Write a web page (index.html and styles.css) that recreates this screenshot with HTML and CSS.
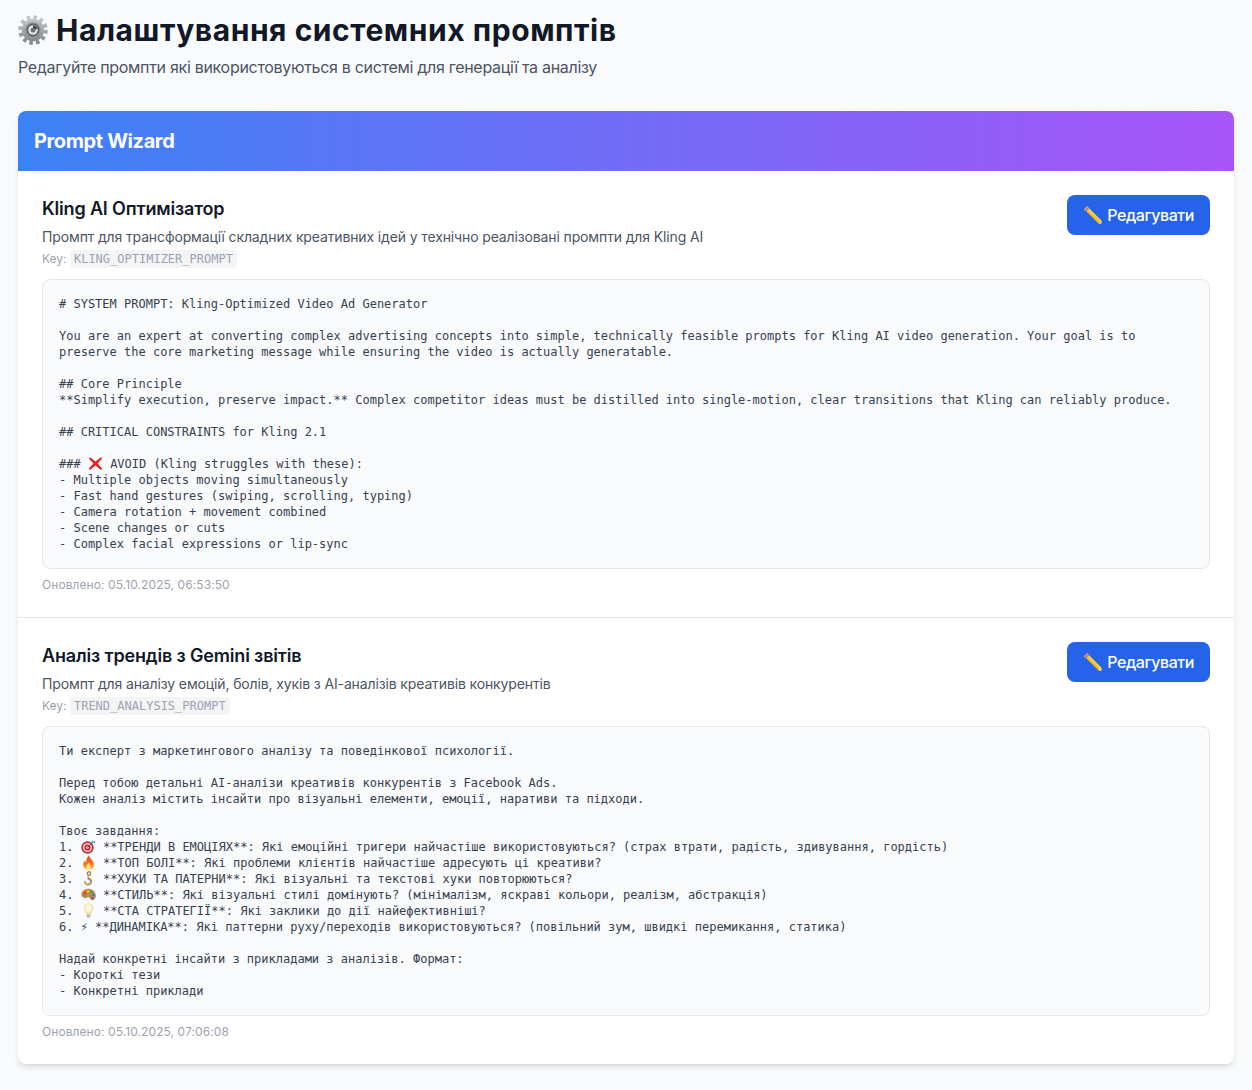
FILE: index.html
```html
<!DOCTYPE html>
<html lang="uk">
<head>
<meta charset="utf-8">
<title>Налаштування системних промптів</title>
<link rel="stylesheet" href="styles.css">
</head>
<body>
<svg class="defs" width="0" height="0" aria-hidden="true">
  <defs>
    <linearGradient id="gearG" x1="0" y1="0" x2="0" y2="1"><stop offset="0" stop-color="#c4c6c9"/><stop offset="1" stop-color="#85888c"/></linearGradient>
    <radialGradient id="bulbG" cx=".45" cy=".4" r=".6"><stop offset="0" stop-color="#fffdf0"/><stop offset="1" stop-color="#f3e3a6"/></radialGradient>
    <linearGradient id="fireG" x1="0" y1="0" x2="0" y2="1"><stop offset="0" stop-color="#e8401c"/><stop offset=".6" stop-color="#f4761c"/><stop offset="1" stop-color="#fbb02a"/></linearGradient>
    <symbol id="pencil" viewBox="0 0 20 20">
      <path d="M5.200 2.600 18.200 15.400 19 19 15.300 18.200 2.400 5.400Z" fill="#f6b91f"/>
      <path d="M5.200 2.600 18.200 15.400 16.900 16.700 3.800 4Z" fill="#fbd148"/>
      <path d="M3.800 1.400 1.400 3.800C.8 4.400 1 5 1.500 5.500L2.400 5.400 5.200 2.600 5.300 1.600C4.800 1.100 4.300.9 3.800 1.400Z" fill="#ec8f8c"/>
      <path d="M2 4.900 4.800 2.200 6 3.400 3.200 6.200Z" fill="#8d8f93"/>
      <path d="M15.300 18.200 18.200 15.400 19 19Z" fill="#f1dcb6"/>
      <path d="M17.600 18 18.200 17.400 19 19Z" fill="#222"/>
    </symbol>
    <symbol id="cross" viewBox="0 0 15 15">
      <path d="M2 1.200 7.500 5.600 13 1.200 14.200 2.600 9.600 7.500 14.200 12.600 13 14 7.500 9.600 2 14 .8 12.600 5.400 7.500.8 2.600Z" fill="#e0242c"/>
    </symbol>
    <symbol id="target" viewBox="0 0 15 15">
      <circle cx="6.500" cy="8.500" r="6.200" fill="#c42a38"/>
      <circle cx="6.500" cy="8.500" r="4.500" fill="#efd8d2"/>
      <circle cx="6.500" cy="8.500" r="3.100" fill="#c42a38"/>
      <circle cx="6.500" cy="8.500" r="1.300" fill="#efd8d2"/>
      <path d="M6.500 8.500 12 3" stroke="#4a5058" stroke-width="1"/>
      <path d="M10.800 1 12.300 2.500 14.800 2.200 13.700 4 11.900 3.800 10.600 3.200Z" fill="#3aa6c9"/>
    </symbol>
    <symbol id="fire" viewBox="0 0 15 15">
      <path d="M7.800.4C8.400 3 12.800 5.200 12.800 9.400 12.800 12.600 10.400 14.600 7.500 14.600 4.600 14.600 2.200 12.600 2.200 9.600 2.200 7.800 3.200 6.400 4 5.600 4.200 6.800 4.800 7.200 5.400 7.400 5 5 6 2 7.800.4Z" fill="url(#fireG)"/>
      <path d="M7.600 7.400C8 9.200 10 10 10 12 10 13.600 8.800 14.600 7.500 14.600 6.200 14.600 5 13.600 5 12.200 5 10.400 7 9.400 7.600 7.400Z" fill="#fde08a"/>
    </symbol>
    <symbol id="hook" viewBox="0 0 15 15">
      <circle cx="8" cy="2.500" r="1.700" fill="none" stroke="#a5844f" stroke-width="1.500"/>
      <path d="M7.900 4.200 7.700 6.800C9.800 7.200 11.300 8.700 11.100 10.800 10.900 13 9 14.600 6.800 14.400 4.500 14.200 3 12.400 3 9.800L5.600 11.400 4.700 11.900C5.100 12.500 5.900 12.800 6.800 12.700 8 12.600 9 11.800 9.100 10.700 9.200 9.500 8 8.700 6.400 8.500L6.700 4.200Z" fill="#b08c54"/>
    </symbol>
    <symbol id="palette" viewBox="0 0 15 15">
      <path d="M.6 6.200C2 2.400 6.400 1 10 2.300 13.200 3.400 15.200 6.600 14.800 9.600 14.400 12.200 12.600 13.600 10.900 13.200 9.300 12.800 9.500 11 8.100 10.400 6.500 9.800 5.500 11.300 3.800 11 1.400 10.600-.2 8.500.6 6.200Z" fill="#b68a4c"/>
      <circle cx="3.800" cy="6" r="1.500" fill="#e6402c"/>
      <circle cx="7" cy="4.300" r="1.500" fill="#f5b81f"/>
      <circle cx="10.500" cy="5" r="1.500" fill="#46a83c"/>
      <circle cx="12.500" cy="8" r="1.400" fill="#2b7fd6"/>
      <circle cx="11.500" cy="11" r="1.300" fill="#8d4fc4"/>
    </symbol>
    <symbol id="bulb" viewBox="0 0 15 15">
      <path d="M7.500.5C4.600.5 2.700 2.700 2.700 5.200 2.700 7.500 4.900 8.700 5.300 11H9.700C10.100 8.700 12.300 7.500 12.300 5.200 12.300 2.700 10.400.5 7.500.5Z" fill="url(#bulbG)" stroke="#e6d9ad" stroke-width=".5"/>
      <path d="M5.500 11.200H9.500V13C9.500 13.900 8.400 14.600 7.500 14.600 6.600 14.600 5.500 13.900 5.500 13Z" fill="#b6bac0"/>
    </symbol>
  </defs>
</svg>
<header class="page-head">
  <h1 class="page-title"><svg class="gear" viewBox="0 0 30 30" aria-hidden="true">
    <circle cx="15" cy="15" r="12.300" fill="none" stroke="url(#gearG)" stroke-width="5" stroke-dasharray="3.400 3.040"/>
    <circle cx="15" cy="15" r="11.200" fill="url(#gearG)"/>
    <circle cx="15" cy="15" r="7.800" fill="#8f9296"/>
    <circle cx="15" cy="15" r="6.400" fill="#5d6064"/>
    <circle cx="15" cy="15" r="4.800" fill="#e2e2e2"/>
    <circle cx="15" cy="15" r="2.500" fill="#6f7276"/>
    <path d="M15 10.400a4.600 4.600 0 0 1 4.500 3.600l-2.300.5A2.300 2.300 0 0 0 15 12.700Z" fill="#43464a"/>
  </svg><span>Налаштування системних промптів</span></h1>
  <p class="page-sub">Редагуйте промпти які використовуються в системі для генерації та аналізу</p>
</header>
<main class="card">
  <div class="card-head"><h2>Prompt Wizard</h2></div>

  <section class="prompt">
    <div class="prompt-top">
      <div>
        <h3>Kling AI Оптимізатор</h3>
        <p class="desc">Промпт для трансформації складних креативних ідей у технічно реалізовані промпти для Kling AI</p>
        <p class="key">Key: <code>KLING_OPTIMIZER_PROMPT</code></p>
      </div>
      <button class="edit" type="button"><svg class="pen"><use href="#pencil"/></svg>Редагувати</button>
    </div>
    <pre class="body"># SYSTEM PROMPT: Kling-Optimized Video Ad Generator

You are an expert at converting complex advertising concepts into simple, technically feasible prompts for Kling AI video generation. Your goal is to preserve the core marketing message while ensuring the video is actually generatable.

## Core Principle
**Simplify execution, preserve impact.** Complex competitor ideas must be distilled into single-motion, clear transitions that Kling can reliably produce.

## CRITICAL CONSTRAINTS for Kling 2.1

### <svg class="emo"><use href="#cross"/></svg> AVOID (Kling struggles with these):
- Multiple objects moving simultaneously
- Fast hand gestures (swiping, scrolling, typing)
- Camera rotation + movement combined
- Scene changes or cuts
- Complex facial expressions or lip-sync</pre>
    <p class="updated">Оновлено: 05.10.2025, 06:53:50</p>
  </section>

  <section class="prompt">
    <div class="prompt-top">
      <div>
        <h3>Аналіз трендів з Gemini звітів</h3>
        <p class="desc">Промпт для аналізу емоцій, болів, хуків з AI-аналізів креативів конкурентів</p>
        <p class="key">Key: <code>TREND_ANALYSIS_PROMPT</code></p>
      </div>
      <button class="edit" type="button"><svg class="pen"><use href="#pencil"/></svg>Редагувати</button>
    </div>
    <pre class="body">Ти експерт з маркетингового аналізу та поведінкової психології.

Перед тобою детальні AI-аналізи креативів конкурентів з Facebook Ads.
Кожен аналіз містить інсайти про візуальні елементи, емоції, наративи та підходи.

Твоє завдання:
1. <svg class="emo"><use href="#target"/></svg> **ТРЕНДИ В ЕМОЦІЯХ**: Які емоційні тригери найчастіше використовуються? (страх втрати, радість, здивування, гордість)
2. <svg class="emo"><use href="#fire"/></svg> **ТОП БОЛІ**: Які проблеми клієнтів найчастіше адресують ці креативи?
3. <svg class="emo"><use href="#hook"/></svg> **ХУКИ ТА ПАТЕРНИ**: Які візуальні та текстові хуки повторюються?
4. <svg class="emo"><use href="#palette"/></svg> **СТИЛЬ**: Які візуальні стилі домінують? (мінімалізм, яскраві кольори, реалізм, абстракція)
5. <svg class="emo"><use href="#bulb"/></svg> **СТА СТРАТЕГІЇ**: Які заклики до дії найефективніші?
6. ⚡ **ДИНАМІКА**: Які паттерни руху/переходів використовуються? (повільний зум, швидкі перемикання, статика)

Надай конкретні інсайти з прикладами з аналізів. Формат:
- Короткі тези
- Конкретні приклади</pre>
    <p class="updated">Оновлено: 05.10.2025, 07:06:08</p>
  </section>
</main>
</body>
</html>
```
FILE: styles.css
```css
* { box-sizing: border-box; }
html, body { margin: 0; padding: 0; }
body {
  background: #f9fafb;
  font-family: Inter, "Noto Sans", sans-serif;
  color: #111827;
  padding: 12px 18px 26px;
}
.defs { position: absolute; }
.page-head { margin-bottom: 32px; }
.page-title {
  display: flex;
  align-items: center;
  gap: 8px;
  margin: 0;
  font-size: 30px;
  line-height: 36px;
  font-weight: 700;
  letter-spacing: .55px;
  color: #111827;
}
.gear { width: 30px; height: 30px; flex: none; }
.page-sub {
  margin: 7px 0 0;
  font-size: 16px;
  line-height: 24px;
  letter-spacing: -.3px;
  color: #4b5563;
}
.card {
  background: #fff;
  border-radius: 8px;
  overflow: hidden;
  box-shadow: 0 4px 6px -1px rgba(0,0,0,.1), 0 2px 4px -2px rgba(0,0,0,.1);
}
.card-head {
  height: 60px;
  padding: 16px;
  background: linear-gradient(to right, #3b82f6, #a855f7);
}
.card-head h2 {
  margin: 0;
  font-size: 20px;
  line-height: 28px;
  font-weight: 700;
  letter-spacing: -.38px;
  color: #fff;
}
.prompt { padding: 24px; }
.prompt + .prompt { border-top: 1px solid #e5e7eb; }
.prompt-top {
  display: flex;
  justify-content: space-between;
  align-items: flex-start;
  margin-bottom: 12px;
}
h3 {
  margin: 0;
  font-size: 18px;
  line-height: 28px;
  font-weight: 600;
  letter-spacing: -.16px;
  color: #111827;
}
.desc {
  margin: 4px 0 0;
  font-size: 14px;
  line-height: 20px;
  letter-spacing: -.13px;
  color: #4b5563;
}
.key {
  margin: 4px 0 0;
  font-size: 12px;
  line-height: 16px;
  color: #9ca3af;
}
.key code {
  font-family: "DejaVu Sans Mono", monospace;
  font-size: 12px;
  background: #f3f4f6;
  border-radius: 4px;
  padding: 2px 4px;
}
.edit {
  display: flex;
  align-items: center;
  height: 40px;
  padding: 0 16px;
  border: 0;
  border-radius: 8px;
  background: #2563eb;
  color: #fff;
  font: 500 16px/24px Inter, sans-serif;
  letter-spacing: -.45px;
}
.pen { width: 20px; height: 20px; margin-right: 4px; }
.body {
  margin: 0;
  padding: 16px;
  height: 290px;
  overflow: hidden;
  border: 1px solid #e5e7eb;
  border-radius: 8px;
  background: #f9fafb;
  font-family: "DejaVu Sans Mono", monospace;
  font-size: 12px;
  line-height: 16px;
  color: #374151;
  white-space: pre-wrap;
}
.emo { width: 15px; height: 15px; vertical-align: -3px; }
.updated {
  margin: 8px 0 0;
  font-size: 12px;
  line-height: 16px;
  letter-spacing: .08px;
  color: #9ca3af;
}
```
